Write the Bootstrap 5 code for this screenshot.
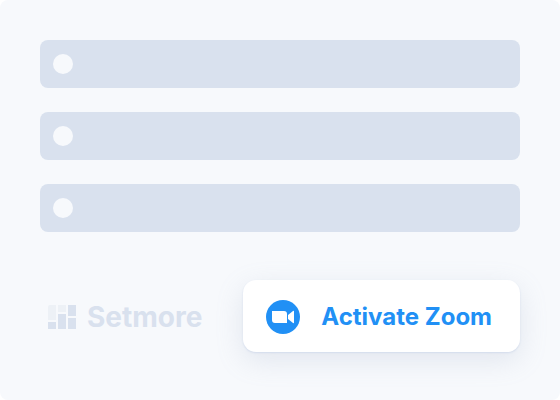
<!DOCTYPE html>
<html lang="en">
<head>
<meta charset="utf-8">
<meta name="viewport" content="width=device-width, initial-scale=1">
<title>Setmore – Activate Zoom</title>
<link href="https://cdn.jsdelivr.net/npm/bootstrap@5.3.0/dist/css/bootstrap.min.css" rel="stylesheet">
<style>
body { background: #fff; font-family: Inter, "Open Sans", sans-serif; }
.panel { background: #f7f9fc; border-radius: 8px; padding: 40px; }
.option-list { gap: 24px; margin-bottom: 48px; }
.option { height: 48px; padding-left: 13px; background: #d9e1ee; border-radius: 8px; }
.dot { width: 20px; height: 20px; background: #f7f9fc; }
.brand { color: #d9e1ee; gap: 11px; padding: 2px 0 0 8px; font-size: 28px; line-height: 36px; font-weight: 700; }
.activate { height: 72px; padding: 2px 28px 0 22px; gap: 20px; background: #fff; color: #2190f5; border: 0; border-radius: 13px; font-size: 24px; line-height: 32px; font-weight: 700; box-shadow: 0 1px 2px #d3dcec, 0 8px 28px rgba(140, 155, 185, .2); }
.activate:hover { background: #fff; color: #1480e4; }
</style>
</head>
<body>
<main class="panel min-vh-100">
  <div class="option-list d-flex flex-column">
    <div class="option d-flex align-items-center"><span class="dot rounded-circle"></span></div>
    <div class="option d-flex align-items-center"><span class="dot rounded-circle"></span></div>
    <div class="option d-flex align-items-center"><span class="dot rounded-circle"></span></div>
  </div>
  <div class="d-flex align-items-center justify-content-between">
    <div class="brand d-flex align-items-center">
      <svg width="28" height="24" viewBox="0 0 28 24" aria-hidden="true">
        <path fill="#edf1f6" d="M2 0h6v15H0V2a2 2 0 0 1 2-2zM10 0h8v7h-8z"/>
        <path fill="#d9e1ee" d="M20 0h8v11h-8zM0 17h8v7H0zM10 9h8v15h-8zM20 13h8v11h-8z"/>
      </svg>
      <span>Setmore</span>
    </div>
    <button type="button" class="activate btn d-flex align-items-center text-nowrap">
      <svg width="36" height="36" viewBox="0 0 36 36" aria-hidden="true">
        <circle cx="18" cy="18" r="17" fill="#2190f5"/>
        <path fill="#fff" d="M7 12h12a3 3 0 0 1 3 3v9H10a3 3 0 0 1-3-3zM23 16l5-4q1-.5 1 .5v11q0 1-1 .5l-5-4z"/>
      </svg>
      <span>Activate Zoom</span>
    </button>
  </div>
</main>
<script src="https://cdn.jsdelivr.net/npm/bootstrap@5.3.0/dist/js/bootstrap.bundle.min.js"></script>
</body>
</html>
